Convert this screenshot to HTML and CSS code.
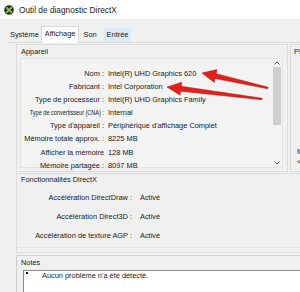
FILE: index.html
```html
<!DOCTYPE html>
<html lang="fr">

<head>
    <meta charset="UTF-8">
    <meta name="viewport" content="width=device-width, initial-scale=1.0">
    <title>Outil de diagnostic DirectX</title>
    <link rel="stylesheet" href="styles.css">
</head>

<body>
    <div class="titlebar">
        <svg class="dx-icon" width="10" height="10" viewBox="0 0 10 10">
            <circle cx="5" cy="5" r="4.8" fill="#2b2b2b"/>
            <path d="M2.6 2.6 L7.4 7.4 M7.4 2.6 L2.6 7.4" stroke="#8cc63f" stroke-width="1.8" stroke-linecap="round"/>
        </svg>
        <span>Outil de diagnostic DirectX</span>
    </div>

    <div class="tabs">
        <span class="tab">Système</span>
        <span class="tab active">Affichage</span>
        <span class="tab son">Son</span>
        <span class="tab hover">Entrée</span>
    </div>

    <div class="page">
        <div class="top">
            <div class="group device">
                <div class="legend">Appareil</div>
                <div class="listbox">
                    <div class="rows">
                        <div class="row"><span class="label">Nom :</span><span>Intel(R) UHD Graphics 620</span></div>
                        <div class="row"><span class="label">Fabricant :</span><span>Intel Corporation</span></div>
                        <div class="row"><span class="label">Type de processeur :</span><span>Intel(R) UHD Graphics Family</span></div>
                        <div class="row"><span class="label"><span class="squeeze">Type de convertisseur (CNA) :</span></span><span>Internal</span></div>
                        <div class="row"><span class="label">Type d'appareil :</span><span>Périphérique d'affichage Complet</span></div>
                        <div class="row"><span class="label">Mémoire totale approx. :</span><span>8225 MB</span></div>
                        <div class="row"><span class="label">Afficher la mémoire</span><span>128 MB</span></div>
                        <div class="row"><span class="label">Mémoire partagée :</span><span>8097 MB</span></div>
                    </div>
                    <div class="scrollbar">
                        <div class="arrow">
                            <svg width="6" height="4" viewBox="0 0 6 4"><path d="M0.5 3.5 L3 1 L5.5 3.5" fill="none" stroke="#606060" stroke-width="1"/></svg>
                        </div>
                        <div class="thumb"></div>
                        <div class="arrow down">
                            <svg width="6" height="4" viewBox="0 0 6 4"><path d="M0.5 0.5 L3 3 L5.5 0.5" fill="none" stroke="#606060" stroke-width="1"/></svg>
                        </div>
                    </div>
                </div>
            </div>
            <div class="group drivers">
                <div class="legend">Pilotes</div>
                <div class="drv-text">M</div>
                <div class="drv-text">&lt;</div>
            </div>
        </div>

        <div class="group features">
            <div class="legend">Fonctionnalités DirectX</div>
            <div class="feat-rows">
                <div class="row"><span class="label">Accélération DirectDraw :</span><span>Activé</span></div>
                <div class="row"><span class="label">Accélération Direct3D :</span><span>Activé</span></div>
                <div class="row"><span class="label">Accélération de texture AGP :</span><span>Activé</span></div>
            </div>
        </div>

        <div class="group notes">
            <div class="legend">Notes</div>
            <div class="notes-box">
                <span class="bullet"></span>Aucun problème n'a été détecté.
            </div>
        </div>
    </div>

    <!-- annotation arrows drawn over the window -->
    <svg class="arrows" width="300" height="292" viewBox="0 0 300 292">
        <polygon points="202,73 216.9,69.6 216.2,73.7 268.2,87.2 267.8,88.8 215,78.5 214.3,82.4"
                 fill="#e3201b" stroke="#a51410" stroke-width="0.5"/>
        <polygon points="167,87 181.7,82.3 181.2,86.3 262.1,98.2 261.9,99.8 180.6,91.2 180.1,95.2"
                 fill="#e3201b" stroke="#a51410" stroke-width="0.5"/>
    </svg>
</body>

</html>
```

FILE: styles.css
```css
body {
    margin: 0;
    width: 300px;
    height: 292px;
    overflow: hidden;
    position: relative;
    background-color: #f0f0f0;
    font-family: "Liberation Sans", Arial, sans-serif;
    font-size: 7.4px;
    color: #202020;
}

.titlebar {
    height: 19px;
    background-color: #ffffff;
    display: flex;
    align-items: center;
    gap: 5px;
    padding-left: 4px;
    font-size: 8.3px;
    color: #1a1a1a;
}

.dx-icon {
    flex: none;
}

.tabs {
    height: 23px;
    display: flex;
    align-items: flex-end;
    padding-left: 8px;
}

.tab {
    height: 14px;
    line-height: 13px;
    padding: 0 2px;
    white-space: nowrap;
}

.tab.active {
    height: 16px;
    line-height: 14px;
    padding: 0 3px;
    background-color: #ffffff;
    border: 1px solid #d9d9d9;
    border-bottom: none;
    margin-bottom: -1px;
    position: relative;
}

.tab.son {
    margin-left: 2px;
}

.tab.hover {
    margin-left: 5px;
    padding: 0 3px;
    background-color: #dbeaf8;
}

.page {
    margin-left: 8px;
    padding-left: 8px;
    border-top: 1px solid #d9d9d9;
}

.group {
    box-sizing: border-box;
    border: 1px solid #dcdcdc;
}

.legend {
    padding: 2px 0 0 4px;
    line-height: 10px;
    white-space: nowrap;
}

.top {
    display: flex;
    gap: 2px;
    margin-top: 1px;
}

.device {
    width: 272px;
    height: 128px;
    flex: none;
}

.listbox {
    margin: 1px 4px 0 3px;
    height: 110px;
    box-sizing: border-box;
    border: 1px solid #e2e2e2;
    background-color: #f3f3f3;
    display: flex;
}

.rows {
    flex: 1;
    padding-top: 8px;
}

.row {
    display: flex;
    gap: 4px;
    line-height: 13.1px;
    white-space: nowrap;
}

.row .label {
    width: 83px;
    flex: none;
    display: flex;
    justify-content: flex-end;
}

.squeeze {
    flex: none;
    transform: scaleX(0.75);
    transform-origin: right center;
}

.scrollbar {
    width: 11px;
    display: flex;
    flex-direction: column;
    align-items: center;
}

.arrow {
    height: 8px;
    display: flex;
    align-items: center;
    justify-content: center;
}

.arrow.down {
    margin-top: auto;
}

.thumb {
    width: 8px;
    height: 58px;
    background-color: #cdcdcd;
}

.drivers {
    flex: 1;
    height: 128px;
    border-right: none;
    overflow: hidden;
}

.drivers .legend {
    padding-left: 3px;
}

.drv-text {
    line-height: 10px;
    padding-left: 6px;
}

.drv-text:nth-of-type(2) {
    margin-top: 90px;
}

.features {
    margin-top: 1px;
    height: 80px;
    border-right: none;
    box-shadow: inset 0 -4px 0 #f0f0f0, inset 0 -5px 0 #e4e4e4;
}

.features .legend {
    padding-top: 1px;
}

.feat-rows {
    padding-top: 2.5px;
}

.feat-rows .row {
    line-height: 19px;
    gap: 8px;
}

.feat-rows .row .label {
    width: 115px;
}

.notes {
    margin-top: 2px;
    height: 40px;
    border-color: #cfcfcf;
    border-right: none;
    border-bottom: none;
}

.notes-box {
    margin: 2px 0 0 6px;
    height: 30px;
    background-color: #ffffff;
    border: 1px solid #8a8a8a;
    border-right: none;
    line-height: 10px;
    padding-left: 2px;
    white-space: nowrap;
}

.bullet {
    display: inline-block;
    width: 2px;
    height: 2px;
    background-color: #111111;
    margin-right: 14px;
    vertical-align: 4px;
}

.arrows {
    position: absolute;
    left: 0;
    top: 0;
    pointer-events: none;
}
```
